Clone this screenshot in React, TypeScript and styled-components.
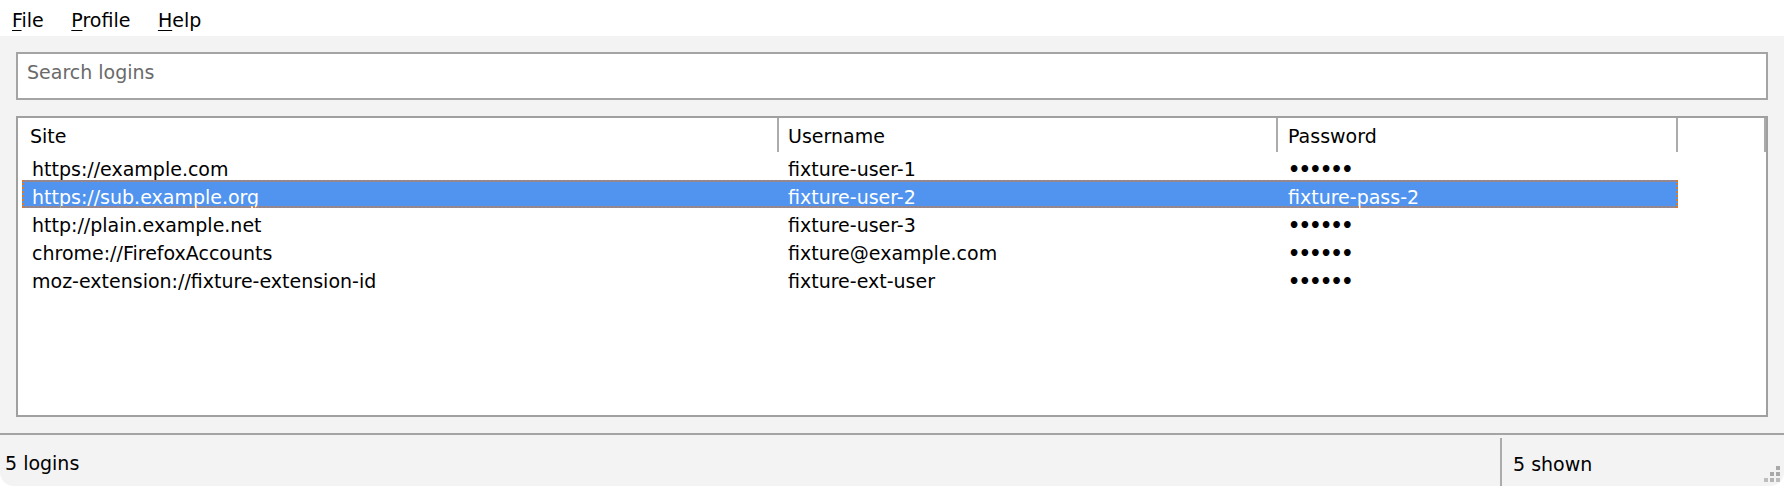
import React from "react";
import styled, { createGlobalStyle } from "styled-components";

const GlobalStyle = createGlobalStyle`
  html, body {
    margin: 0;
    padding: 0;
    background: #ffffff;
  }
  body {
    font-family: "DejaVu Sans", "Noto Sans", sans-serif;
    font-size: 19px;
    color: #000;
  }
  * { box-sizing: border-box; }
`;

const Window = styled.div`
  width: 1784px;
  height: 486px;
  display: flex;
  flex-direction: column;
  background: #f3f3f3;
  border-radius: 0 0 14px 14px;
  overflow: hidden;
`;

const MenuBar = styled.div`
  height: 36px;
  flex: none;
  background: #ffffff;
  display: flex;
  align-items: flex-start;
  gap: 27.5px;
  padding: 0 0 0 12px;
`;

const MenuItem = styled.span`
  line-height: 34px;
  padding-top: 3px;
`;

const Mnemonic = styled.span`
  text-decoration: underline;
  text-underline-offset: 3px;
`;

const Content = styled.div`
  flex: 1;
  display: flex;
  flex-direction: column;
  gap: 16px;
  padding: 16px 16px 16px 16px;
  min-height: 0;
`;

const SearchInput = styled.input`
  height: 48px;
  flex: none;
  border: 2px solid #a4a4a4;
  background: #ffffff;
  padding: 0 9px 8px 9px;
  font-family: inherit;
  font-size: 19px;
  outline: none;
  &::placeholder {
    color: #6a6a6a;
  }
`;

const Table = styled.div`
  flex: 1;
  border: 2px solid #a0a0a0;
  background: #ffffff;
  display: flex;
  flex-direction: column;
  min-height: 0;
`;

const HeaderRow = styled.div`
  display: grid;
  grid-template-columns: 761px 499px 400px 88px;
  height: 34px;
  flex: none;
`;

const HeaderCell = styled.div<{ $pad: number }>`
  border-right: 2px solid #ababab;
  padding-left: ${(p) => p.$pad}px;
  padding-top: 2px;
  line-height: 32px;
  white-space: nowrap;
`;

const Body = styled.div`
  padding-left: 4px;
  display: flex;
  flex-direction: column;
`;

const Row = styled.div<{ $selected?: boolean }>`
  display: grid;
  grid-template-columns: 757px 499px 400px;
  height: 28px;
  width: 1656px;
  background: ${(p) => (p.$selected ? "#5094f0" : "transparent")};
  color: ${(p) => (p.$selected ? "#ffffff" : "#000000")};
  outline: ${(p) => (p.$selected ? "2px dotted #d97a2c" : "none")};
  outline-offset: -2px;
`;

const Cell = styled.div<{ $pad: number }>`
  padding-left: ${(p) => p.$pad}px;
  padding-top: 6px;
  line-height: 22px;
  height: 28px;
  white-space: nowrap;
  overflow: hidden;
`;

const Dots = styled.span`
  letter-spacing: -1.5px;
  font-weight: bold;
`;

const StatusBar = styled.div`
  height: 53px;
  flex: none;
  border-top: 2px solid #a4a4a4;
  display: flex;
`;

const StatusLeft = styled.div`
  flex: 1;
  padding-left: 5px;
  padding-top: 6px;
  line-height: 44px;
`;

const StatusRight = styled.div`
  width: 284px;
  margin-top: 3px;
  border-left: 2px solid #ababab;
  padding-left: 11px;
  display: flex;
`;

const StatusText = styled.span`
  flex: 1;
  padding-top: 5px;
  line-height: 42px;
`;

const Grip = styled.svg`
  align-self: flex-end;
  margin: 0 4px 4px 0;
  flex: none;
`;

const logins = [
  { site: "https://example.com", user: "fixture-user-1", pass: "fixture-pass-1" },
  { site: "https://sub.example.org", user: "fixture-user-2", pass: "fixture-pass-2" },
  { site: "http://plain.example.net", user: "fixture-user-3", pass: "fixture-pass-3" },
  { site: "chrome://FirefoxAccounts", user: "fixture@example.com", pass: "fixture-pass-4" },
  { site: "moz-extension://fixture-extension-id", user: "fixture-ext-user", pass: "fixture-pass-5" },
];

const selectedIndex = 1;

export default function App() {
  return (
    <>
      <GlobalStyle />
      <Window>
        <MenuBar>
          <MenuItem>
            <Mnemonic>F</Mnemonic>ile
          </MenuItem>
          <MenuItem>
            <Mnemonic>P</Mnemonic>rofile
          </MenuItem>
          <MenuItem>
            <Mnemonic>H</Mnemonic>elp
          </MenuItem>
        </MenuBar>
        <Content>
          <SearchInput placeholder="Search logins" />
          <Table>
            <HeaderRow>
              <HeaderCell $pad={12}>Site</HeaderCell>
              <HeaderCell $pad={9}>Username</HeaderCell>
              <HeaderCell $pad={10}>Password</HeaderCell>
              <HeaderCell $pad={0} />
            </HeaderRow>
            <Body>
              {logins.map((l, i) => {
                const sel = i === selectedIndex;
                return (
                  <Row key={l.site} $selected={sel}>
                    <Cell $pad={10}>{l.site}</Cell>
                    <Cell $pad={9}>{l.user}</Cell>
                    <Cell $pad={10}>{sel ? l.pass : <Dots>••••••</Dots>}</Cell>
                  </Row>
                );
              })}
            </Body>
          </Table>
        </Content>
        <StatusBar>
          <StatusLeft>5 logins</StatusLeft>
          <StatusRight>
            <StatusText>5 shown</StatusText>
            <Grip width="16" height="16" viewBox="0 0 16 16">
              <rect x="12" y="0" width="4" height="4" fill="#a9a9a9" />
              <rect x="6" y="6" width="4" height="4" fill="#a9a9a9" />
              <rect x="12" y="6" width="4" height="4" fill="#a9a9a9" />
              <rect x="0" y="12" width="4" height="4" fill="#bdbdbd" />
              <rect x="6" y="12" width="4" height="4" fill="#b3b3b3" />
              <rect x="12" y="12" width="4" height="4" fill="#bdbdbd" />
            </Grip>
          </StatusRight>
        </StatusBar>
      </Window>
    </>
  );
}
